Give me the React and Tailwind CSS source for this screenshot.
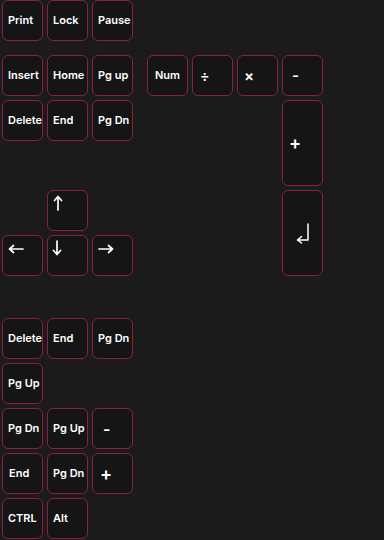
import React from "react";

const keyBase =
  "h-[41px] w-[41px] rounded-[6px] border border-[#8a2044] bg-[#151515] flex items-center text-white font-semibold text-[11px] leading-none";

function Key({ children, className = "" }) {
  return <div className={`${keyBase} ${className}`}>{children}</div>;
}

function TKey({ label, className = "" }) {
  return <Key className={`pl-[5px] ${className}`}>{label}</Key>;
}

const Up = () => (
  <svg width="10" height="16" viewBox="0 0 10 16" fill="none" stroke="white" strokeWidth="1.7" strokeLinecap="round" strokeLinejoin="round">
    <path d="M5 15V2M1.5 5.5L5 1.5L8.5 5.5" />
  </svg>
);
const Down = () => (
  <svg width="10" height="16" viewBox="0 0 10 16" fill="none" stroke="white" strokeWidth="1.7" strokeLinecap="round" strokeLinejoin="round">
    <path d="M5 1V14M1.5 10.5L5 14.5L8.5 10.5" />
  </svg>
);
const Left = () => (
  <svg width="16" height="10" viewBox="0 0 16 10" fill="none" stroke="white" strokeWidth="1.7" strokeLinecap="round" strokeLinejoin="round">
    <path d="M15 5H2M5.5 1.5L1.5 5L5.5 8.5" />
  </svg>
);
const Right = () => (
  <svg width="16" height="10" viewBox="0 0 16 10" fill="none" stroke="white" strokeWidth="1.7" strokeLinecap="round" strokeLinejoin="round">
    <path d="M1 5H14M10.5 1.5L14.5 5L10.5 8.5" />
  </svg>
);
const Enter = () => (
  <svg width="16" height="22" viewBox="0 0 16 22" fill="none" stroke="white" strokeWidth="1.5" strokeLinecap="round" strokeLinejoin="round">
    <path d="M13 2V18H3M6.5 14.5L2.5 18L6.5 21" />
  </svg>
);

export default function App() {
  return (
    <div
      className="w-[384px] h-[540px] overflow-hidden bg-[#1b1b1b] pl-[2px]"
      style={{ fontFamily: "Inter, 'Noto Sans', sans-serif" }}
    >
      <div className="flex gap-[4px]">
        <TKey label="Print" />
        <TKey label="Lock" />
        <TKey label="Pause" />
      </div>

      <div className="mt-[14px] grid grid-cols-[41px_41px_41px_6px_41px_41px_41px_41px] grid-rows-[41px_41px_41px_41px_41px] gap-[4px]">
        <TKey label="Insert" className="col-start-1 row-start-1" />
        <TKey label="Home" className="col-start-2 row-start-1" />
        <TKey label="Pg up" className="col-start-3 row-start-1" />
        <Key className="col-start-5 row-start-1 pl-[7px]">Num</Key>
        <Key className="col-start-6 row-start-1 pl-[7px] text-[14px]">÷</Key>
        <Key className="col-start-7 row-start-1 pl-[6px] text-[15px]">×</Key>
        <Key className="col-start-8 row-start-1 pl-[9px] text-[15px]">-</Key>

        <TKey label="Delete" className="col-start-1 row-start-2" />
        <TKey label="End" className="col-start-2 row-start-2" />
        <TKey label="Pg Dn" className="col-start-3 row-start-2" />
        <Key className="col-start-8 row-start-2 row-span-2 h-auto pl-[6px] text-[18px]">+</Key>

        <Key className="col-start-2 row-start-4 items-start pt-[4px] pl-[5px]">
          <Up />
        </Key>
        <Key className="col-start-8 row-start-4 row-span-2 h-auto justify-center">
          <Enter />
        </Key>

        <Key className="col-start-1 row-start-5 items-start pt-[8px] pl-[5px]">
          <Left />
        </Key>
        <Key className="col-start-2 row-start-5 items-start pt-[4px] pl-[4px]">
          <Down />
        </Key>
        <Key className="col-start-3 row-start-5 items-start pt-[8px] pl-[5px]">
          <Right />
        </Key>
      </div>

      <div className="mt-[42px] grid grid-cols-[41px_41px_41px] grid-rows-[41px_41px_41px_41px_41px] gap-[4px]">
        <TKey label="Delete" />
        <TKey label="End" />
        <TKey label="Pg Dn" />

        <TKey label="Pg Up" className="col-start-1" />
        <div />
        <div />

        <TKey label="Pg Dn" />
        <TKey label="Pg Up" />
        <Key className="pl-[10px] text-[16px]">-</Key>

        <TKey label="End" className="pl-[6px]" />
        <TKey label="Pg Dn" />
        <Key className="pl-[7px] text-[18px]">+</Key>

        <TKey label="CTRL" />
        <TKey label="Alt" />
      </div>
    </div>
  );
}
